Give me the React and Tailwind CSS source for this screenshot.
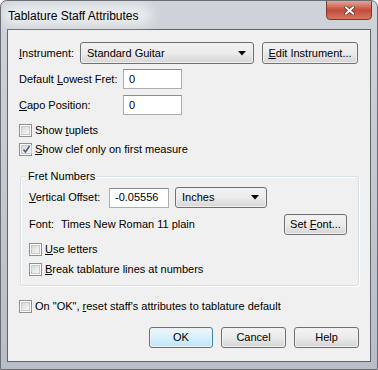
import React from 'react';

const font = { fontFamily: '"Liberation Sans", Arial, sans-serif' };

function CheckBox({ checked }) {
  return (
    <span className="w-[13px] h-[13px] border border-[#8e8f8f] bg-white p-[1px] shrink-0 flex">
      <span className="flex-1 bg-gradient-to-br from-[#d9d9d9] to-[#f7f7f7] border border-[#c8c8c8] flex items-center justify-center">
        {checked && (
          <svg width="9" height="9" viewBox="0 0 9 9">
            <path d="M1.5 4.5 L3.5 7 L7.5 1" fill="none" stroke="#4a5f92" strokeWidth="1.6" />
          </svg>
        )}
      </span>
    </span>
  );
}

function Check({ checked, children }) {
  return (
    <div className="flex items-center gap-[3px] h-[13px]">
      <CheckBox checked={checked} />
      <span className="leading-[13px]">{children}</span>
    </div>
  );
}

function Button({ children, className = '', primary }) {
  return (
    <div
      className={
        'h-[21px] rounded-[3px] border flex p-[1px] ' +
        (primary ? 'border-[#3c7fb1] ' : 'border-[#707070] ') +
        className
      }
    >
      <div
        className={
          'flex-1 rounded-[2px] flex items-center justify-center ' +
          (primary
            ? 'bg-gradient-to-b from-[#eaf6fd] via-[#d9f0fc] to-[#bee6fd]'
            : 'bg-gradient-to-b from-[#f2f2f2] via-[#ebebeb] to-[#d6d6d6]')
        }
      >
        {children}
      </div>
    </div>
  );
}

function Combo({ children, className = '' }) {
  return (
    <div className={'rounded-[3px] border border-[#707070] flex p-[1px] ' + className}>
      <div className="flex-1 rounded-[2px] bg-gradient-to-b from-[#f2f2f2] via-[#ebebeb] to-[#d8d8d8] flex items-center pl-[5px] pr-[6px]">
        <span className="flex-1">{children}</span>
        <svg width="8" height="5" viewBox="0 0 8 5">
          <path d="M0 0 H8 L4 4.5 Z" fill="#000" />
        </svg>
      </div>
    </div>
  );
}

function Field({ value, className = '' }) {
  return (
    <div className={'h-[20px] bg-white border border-[#abadb3] border-t-[#8a8c91] flex items-center pl-[5px] ' + className}>
      {value}
    </div>
  );
}

export default function App() {
  return (
    <div
      className="w-[378px] h-[370px] bg-gradient-to-b from-[#cfd4da] via-[#c3c9cf] to-[#b8bec5] border border-[#6b6f74] rounded-t-[7px] flex flex-col text-[11px] text-black overflow-hidden"
      style={font}
    >
      {/* title bar */}
      <div className="h-[28px] flex items-start relative">
        <span className="absolute left-[1px] top-[4px] w-[150px] h-[20px] rounded-full bg-white/60 blur-[6px]" />
        <span className="relative pl-[7px] pt-[8px] text-[12px] leading-[14px] text-black">Tablature Staff Attributes</span>
        <div className="ml-auto mr-[5px] w-[46px] h-[20px] mt-[-1px] rounded-b-[4px] border border-[#7a3a33] bg-gradient-to-b from-[#e3a597] via-[#c44b3d] to-[#d6745f] flex items-center justify-center">
          <svg width="11" height="9" viewBox="0 0 11 9">
            <path d="M2 1.5 L9 7.5 M9 1.5 L2 7.5" stroke="#5a2a24" strokeWidth="3.4" strokeLinecap="square" />
            <path d="M2 1.5 L9 7.5 M9 1.5 L2 7.5" stroke="#fff" strokeWidth="2" strokeLinecap="square" />
          </svg>
        </div>
      </div>

      {/* client area */}
      <div className="mx-[6px] mb-[7px] flex-1 border border-[#5f6469] bg-[#f0f0f0] flex flex-col pt-[12px] pl-[11px] pr-[11px]">
        <div className="flex items-center h-[22px]">
          <span className="w-[61px]">
            <u>I</u>nstrument:
          </span>
          <Combo className="w-[174px] h-[22px]">Standard Guitar</Combo>
          <Button className="ml-[8px] w-[96px] !h-[22px]">
            <span>
              <u>E</u>dit Instrument...
            </span>
          </Button>
        </div>

        <div className="flex items-center mt-[5px]">
          <span className="w-[104px]">
            Default <u>L</u>owest Fret:
          </span>
          <Field value="0" className="w-[59px]" />
        </div>

        <div className="flex items-center mt-[6px]">
          <span className="w-[104px]">
            <u>C</u>apo Position:
          </span>
          <Field value="0" className="w-[59px]" />
        </div>

        <div className="mt-[9px]">
          <Check>
            Show <u>t</u>uplets
          </Check>
        </div>
        <div className="mt-[6px]">
          <Check checked>
            <u>S</u>how clef only on first measure
          </Check>
        </div>

        {/* group box */}
        <div className="mt-[20px] ml-[1px] relative border border-[#d5dfe5] rounded-[3px] shadow-[inset_1px_1px_0_#fff,1px_1px_0_#fff] pt-[10px] pl-[8px] pr-[11px] pb-[9px]">
          <span className="absolute left-[5px] top-[-8px] px-[2px] bg-[#f0f0f0] leading-[14px]">Fret Numbers</span>

          <div className="flex items-center">
            <span className="w-[80px]">
              <u>V</u>ertical Offset:
            </span>
            <Field value="-0.05556" className="w-[60px]" />
            <Combo className="ml-[6px] w-[92px] h-[21px]">Inches</Combo>
          </div>

          <div className="flex items-center mt-[6px]">
            <span className="w-[32px]">Font:</span>
            <span>Times New Roman 11 plain</span>
            <Button className="ml-auto w-[63px]">
              <span>
                Set <u>F</u>ont...
              </span>
            </Button>
          </div>

          <div className="mt-[8px]">
            <Check>
              <u>U</u>se letters
            </Check>
          </div>
          <div className="mt-[7px]">
            <Check>
              <u>B</u>reak tablature lines at numbers
            </Check>
          </div>
        </div>

        <div className="mt-[14px]">
          <Check>
            On "OK", <u>r</u>eset staff's attributes to tablature default
          </Check>
        </div>

        <div className="flex justify-end gap-[8px] mt-[14px]">
          <Button primary className="w-[64px]">OK</Button>
          <Button className="w-[65px]">Cancel</Button>
          <Button className="w-[65px]">Help</Button>
        </div>
      </div>
    </div>
  );
}
